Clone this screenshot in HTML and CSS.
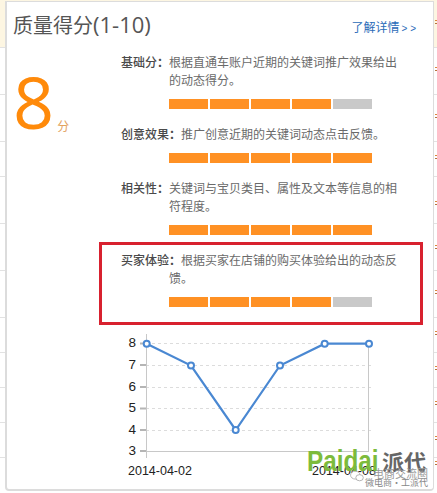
FILE: index.html
```html
<!DOCTYPE html>
<html lang="zh">
<head>
<meta charset="utf-8">
<title>质量得分</title>
<link rel="stylesheet" href="styles.css">
</head>
<body>
<section class="panel">
  <header class="head">
    <h1 class="title">质量得分<span class="title-range">(1-10)</span></h1>
    <a class="more" href="#">了解详情<span class="more-arrows">&gt; &gt;</span></a>
  </header>
  <div class="main">
    <div class="score"><span class="score-num">8</span><span class="score-unit">分</span></div>
    <div class="details">
      <div class="row">
        <p class="desc"><b class="label">基础分<span class="colon">：</span></b>根据直通车账户近期的关键词推广效果给出的动态得分。</p>
        <div class="bars"><i class="bar"></i><i class="bar"></i><i class="bar"></i><i class="bar"></i><i class="bar off"></i></div>
      </div>
      <div class="row">
        <p class="desc"><b class="label">创意效果<span class="colon">：</span></b>推广创意近期的关键词动态点击反馈。</p>
        <div class="bars"><i class="bar"></i><i class="bar"></i><i class="bar"></i><i class="bar"></i><i class="bar"></i></div>
      </div>
      <div class="row">
        <p class="desc"><b class="label">相关性<span class="colon">：</span></b>关键词与宝贝类目、属性及文本等信息的相符程度。</p>
        <div class="bars"><i class="bar"></i><i class="bar"></i><i class="bar"></i><i class="bar"></i><i class="bar"></i></div>
      </div>
      <div class="row row-marked">
        <p class="desc"><b class="label">买家体验<span class="colon">：</span></b>根据买家在店铺的购买体验给出的动态反馈。</p>
        <div class="bars"><i class="bar"></i><i class="bar"></i><i class="bar"></i><i class="bar"></i><i class="bar off"></i></div>
      </div>
      <svg class="chart" viewBox="99 325 328 164" width="328" height="164" aria-label="趋势图">
        <g class="grid">
          <line x1="146" y1="343.5" x2="374" y2="343.5"/>
          <line x1="146" y1="365.5" x2="374" y2="365.5"/>
          <line x1="146" y1="387.5" x2="374" y2="387.5"/>
          <line x1="146" y1="408.5" x2="374" y2="408.5"/>
          <line x1="146" y1="430.5" x2="374" y2="430.5"/>
        </g>
        <g class="axis">
          <line x1="146.5" y1="334" x2="146.5" y2="458"/>
          <line x1="368.5" y1="343" x2="368.5" y2="451"/>
          <line x1="146" y1="451.5" x2="369" y2="451.5"/>
        </g>
        <g class="ticks">
          <line x1="140" y1="365" x2="146" y2="365"/>
          <line x1="140" y1="387" x2="146" y2="387"/>
          <line x1="140" y1="408.5" x2="146" y2="408.5"/>
          <line x1="140" y1="430" x2="146" y2="430"/>
          <line x1="140" y1="451" x2="146" y2="451"/>
          <line x1="140" y1="343.5" x2="146" y2="343.5"/>
        </g>
        <g class="ylabels">
          <text x="128.5" y="346.5">8</text>
          <text x="128.5" y="368.5">7</text>
          <text x="128.5" y="390.5">6</text>
          <text x="128.5" y="411.5">5</text>
          <text x="128.5" y="433.5">4</text>
          <text x="128.5" y="454.5">3</text>
        </g>
        <text class="xlabel" x="128" y="475">2014-04-02</text>
        <text class="xlabel" x="312" y="475">2014-04-08</text>
        <polyline class="line" points="146.7,343.7 191,365.5 235.7,430 280,365.5 324.7,343.7 369,343.7"/>
        <g class="dots">
          <circle cx="146.7" cy="343.7" r="3"/>
          <circle cx="191" cy="365.5" r="3"/>
          <circle cx="235.7" cy="430" r="3"/>
          <circle cx="280" cy="365.5" r="3"/>
          <circle cx="324.7" cy="343.7" r="3"/>
          <circle cx="369" cy="343.7" r="3"/>
        </g>
      </svg>
    </div>
  </div>
  <div class="mark">
    <div class="mark-top"><span class="mark-en">Paidai</span><span class="mark-cn">派代</span></div>
    <div class="mark-sub">
      <svg class="mark-icon" viewBox="0 0 16 14" width="14" height="12" aria-hidden="true">
        <ellipse cx="6" cy="6" rx="5.5" ry="4.6"/>
        <ellipse cx="11" cy="9" rx="4.4" ry="3.6"/>
      </svg>
      <div class="mark-lines">
        <span class="mark-line">电商交流圈</span>
        <span class="mark-line mark-line-low">微电商·工派代</span>
      </div>
    </div>
  </div>
</section>
</body>
</html>
```
FILE: styles.css
```css
* { box-sizing: border-box; }

html, body { margin: 0; height: 100%; }

body {
  --rule: linear-gradient(#e2e2e2, #e2e2e2);
  --dot: linear-gradient(#d9863c 0 1px, transparent 1px 3px, #b5743c 3px 4px);
  width: 437px;
  height: 493px;
  overflow: hidden;
  padding: 1px 3px 2px 5px;
  font-family: "Noto Sans CJK SC", "Liberation Sans", sans-serif;
  background-color: #fff;
  background-repeat: no-repeat;
  background-image:
    var(--dot), var(--dot), var(--dot), var(--dot), var(--dot), var(--dot),
    var(--dot), var(--dot), var(--dot), var(--dot), var(--dot), var(--dot),
    var(--rule), var(--rule), var(--rule), var(--rule), var(--rule), var(--rule),
    var(--rule), var(--rule), var(--rule), var(--rule), var(--rule),
    linear-gradient(#fdf6e2, #fdf6e2);
  background-size:
    2px 4px, 2px 4px, 2px 4px, 2px 4px, 2px 4px, 2px 4px,
    2px 4px, 2px 4px, 2px 4px, 2px 4px, 2px 4px, 2px 4px,
    100% 1px, 100% 1px, 100% 1px, 100% 1px, 100% 1px, 100% 1px,
    100% 1px, 100% 1px, 100% 1px, 100% 1px, 100% 1px,
    100% 47px;
  background-position:
    435px 20px, 435px 67px, 435px 114px, 435px 155px, 435px 201px, 435px 245px,
    435px 290px, 435px 331px, 435px 366px, 435px 401px, 435px 436px, 435px 461px,
    0 47px, 0 94px, 0 141px, 0 176px, 0 223px, 0 270px,
    0 317px, 0 352px, 0 387px, 0 422px, 0 457px,
    0 0;
}

.panel {
  position: relative;
  height: 490px;
  background: #fff;
  border: 1px solid #dcdcdc;
  border-left-width: 2px;
  border-bottom-width: 2px;
  border-radius: 0 0 4px 4px;
  overflow: hidden;
}

.head {
  display: flex;
  justify-content: space-between;
  align-items: flex-start;
  height: 42px;
  padding: 0 17px 0 6px;
}

.title {
  margin: 7px 0 0;
  font-size: 20px;
  line-height: 30px;
  font-weight: 400;
  color: #555;
}

.title-range {
  font-family: "Open Sans", sans-serif;
  font-size: 22px;
}

.more {
  margin-top: 16px;
  font-size: 12px;
  line-height: 18px;
  color: #2a6bb8;
  text-decoration: none;
}

.more-arrows {
  margin-left: 2px;
  font-family: "Liberation Sans", sans-serif;
  font-size: 10px;
}

.main { display: flex; }

.score {
  flex: none;
  width: 92px;
  height: 100px;
  padding: 13px 0 0 6px;
  display: flex;
  align-items: baseline;
}

.score-num {
  font-family: "Open Sans", sans-serif;
  font-size: 72px;
  line-height: 88px;
  color: #ff8a0a;
}

.score-unit {
  margin-left: 3px;
  font-size: 12px;
  color: #e3a25e;
  transform: translateY(2px);
}

.details { flex: none; width: 328px; }

.row {
  width: 324px;
  border: 3px solid transparent;
  padding: 6px 0 4px 19px;
}

.row-marked {
  border-color: #d8212f;
  padding-bottom: 15px;
}

.desc {
  margin: 0;
  width: 277px;
  padding-left: 48px;
  text-indent: -48px;
  font-size: 12px;
  line-height: 18px;
  color: #6a6a6a;
}

.label { font-weight: 500; color: #4a4a4a; }

.colon { font-family: "Noto Sans CJK TC", sans-serif; font-weight: 700; }

.bars {
  display: flex;
  gap: 2px;
  margin: 10px 0 0 48px;
}

.bar { width: 39px; height: 10px; background: #ff9124; }
.bar.off { background: #c9c9c9; }

.chart { display: block; }

.grid line { stroke: #dcdcdc; stroke-dasharray: 3 3; }
.axis line { stroke: #c8c8c8; }
.ticks line { stroke: #b5b5b5; stroke-width: 2; }

.ylabels text {
  font-family: "Liberation Sans", sans-serif;
  font-size: 13.5px;
  fill: #222;
}

.xlabel {
  font-family: "Liberation Sans", sans-serif;
  font-size: 12.5px;
  fill: #222;
}

.line { fill: none; stroke: #4a88d2; stroke-width: 2.2; }
.dots circle { fill: #fff; stroke: #4a88d2; stroke-width: 2; }

.mark {
  position: absolute;
  left: 300px;
  top: 445px;
  width: 122px;
}

.mark-top { display: flex; align-items: center; height: 27px; }

.mark-en {
  flex: none;
  width: 71px;
  font-family: "Liberation Sans", sans-serif;
  font-size: 30px;
  line-height: 27px;
  font-weight: 700;
  color: #7dbb3c;
  transform: scaleX(.81);
  transform-origin: left center;
}

.mark-cn {
  flex: none;
  margin-left: 4px;
  font-size: 22px;
  line-height: 27px;
  font-weight: 700;
  color: #666;
  white-space: nowrap;
}

.mark-sub {
  display: flex;
  align-items: flex-start;
  margin: -5px 0 0 43px;
}

.mark-icon { flex: none; margin-top: 1px; fill: #fff; stroke: #aaa; stroke-width: 1; }

.mark-lines {
  display: flex;
  flex-direction: column;
  align-items: flex-end;
  width: 62px;
  margin-left: 2px;
}

.mark-line {
  font-size: 11px;
  line-height: 9px;
  white-space: nowrap;
  color: #999;
}

.mark-line-low { font-size: 9px; color: #888; }
```
